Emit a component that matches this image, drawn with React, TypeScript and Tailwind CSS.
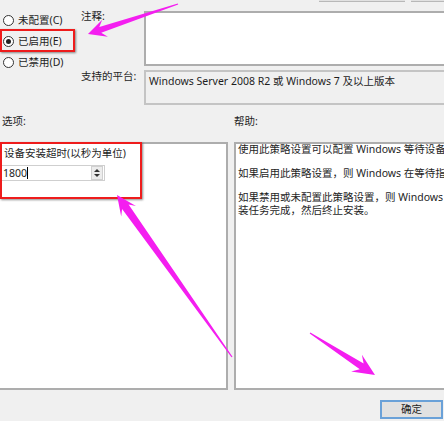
type P = [number, number];

// tapered annotation arrow: thin at the tail, wide barbed head at the tip
function arrow(tail: P, tip: P, headLen: number, headHalf: number, neckHalf: number) {
  const dx = tip[0] - tail[0];
  const dy = tip[1] - tail[1];
  const len = Math.hypot(dx, dy);
  const ux = dx / len;
  const uy = dy / len;
  const px = -uy;
  const py = ux;
  const base: P = [tip[0] - ux * headLen, tip[1] - uy * headLen];
  const neck: P = [tip[0] - ux * headLen * 0.72, tip[1] - uy * headLen * 0.72];
  const pts: P[] = [
    [tail[0] + px * 0.6, tail[1] + py * 0.6],
    [neck[0] + px * neckHalf, neck[1] + py * neckHalf],
    [base[0] + px * headHalf, base[1] + py * headHalf],
    tip,
    [base[0] - px * headHalf, base[1] - py * headHalf],
    [neck[0] - px * neckHalf, neck[1] - py * neckHalf],
    [tail[0] - px * 0.6, tail[1] - py * 0.6],
  ];
  return pts.map((p) => `${p[0].toFixed(1)},${p[1].toFixed(1)}`).join(" ");
}

const Radio = ({ label, checked }: { label: string; checked?: boolean }) => (
  <div className="flex items-center h-[21px] pl-[3px] gap-[4px]">
    <span className="w-[11px] h-[11px] rounded-full border border-[#333] bg-white flex items-center justify-center">
      {checked && <span className="w-[5px] h-[5px] rounded-full bg-[#222]" />}
    </span>
    <span className="leading-[13px] whitespace-nowrap">{label}</span>
  </div>
);

export default function App() {
  return (
    <div className="relative w-[444px] h-[423px] overflow-hidden bg-white text-[10.5px] text-[#1e1e1e] font-['Noto_Sans','Noto_Sans_CJK_SC',sans-serif]">
      <div className="h-[421px] bg-[#f0f0f0] flex flex-col">
        {/* bottoms of the buttons cut off by the screenshot */}
        <div className="flex h-[2px] gap-[6px] pl-[319px]">
          <div className="w-[86px] shrink-0 bg-[#e1e1e1] border-b border-[#b8b8b8]" />
          <div className="w-[40px] shrink-0 bg-[#e1e1e1] border-b border-[#b8b8b8]" />
        </div>

        <div className="flex h-[108px]">
          <div className="w-[81px] shrink-0 pt-[8px] flex flex-col">
            <Radio label="未配置(C)" />
            <Radio label="已启用(E)" checked />
            <Radio label="已禁用(D)" />
          </div>
          <div className="pt-[9px] flex flex-col gap-[4px]">
            <div className="flex">
              <span className="w-[63px] shrink-0 leading-[13px] -mt-[1px]">注释:</span>
              <div className="w-[320px] shrink-0 h-[55px] bg-white border-2 border-[#adadad]" />
            </div>
            <div className="flex">
              <span className="w-[63px] shrink-0 leading-[13px] whitespace-nowrap">支持的平台:</span>
              <div className="w-[320px] shrink-0 h-[35px] border-2 border-[#c4c4c4] pl-[3px] pt-[3px] leading-[13px] whitespace-nowrap">
                Windows Server 2008 R2 或 Windows 7 及以上版本
              </div>
            </div>
          </div>
        </div>

        <div className="flex h-[32px] pt-[5px] leading-[13px]">
          <span className="w-[234px] shrink-0 pl-[2px]">选项:</span>
          <span>帮助:</span>
        </div>

        <div className="flex h-[248px] gap-[6px]">
          <div className="w-[228px] shrink-0 bg-white border-2 border-l-0 border-[#adadad] pt-[3px]">
            <div className="pl-[4px] leading-[13px] whitespace-nowrap">设备安装超时(以秒为单位)</div>
            <div className="mt-[5px] w-[105px] h-[16px] bg-white border border-[#cfcfcf] flex items-center justify-between">
              <span className="flex items-center pl-[2px] leading-[13px]">
                1800
                <span className="w-px h-[12px] bg-black" />
              </span>
              <span className="w-[12px] h-[14px] mr-[1px] bg-[#ececec] border border-[#d0d0d0] flex flex-col items-center justify-center gap-[2px]">
                <span className="w-0 h-0 border-l-[3px] border-r-[3px] border-b-[3px] border-l-transparent border-r-transparent border-b-[#333]" />
                <span className="w-0 h-0 border-l-[3px] border-r-[3px] border-t-[3px] border-l-transparent border-r-transparent border-t-[#333]" />
              </span>
            </div>
          </div>
          <div className="w-[216px] shrink-0 bg-white border-2 border-r-0 border-[#adadad] pl-[2px] leading-[13px] whitespace-nowrap overflow-hidden">
            <p className="-mt-[1px] mb-[11px]">使用此策略设置可以配置 Windows 等待设备安装任务完成的秒数。</p>
            <p className="mb-[11px]">如果启用此策略设置，则 Windows 在等待指定的秒数后终止安装。</p>
            <p>如果禁用或未配置此策略设置，则 Windows 将等待 5 分钟让设备安</p>
            <p>装任务完成，然后终止安装。</p>
          </div>
        </div>

        <div className="flex justify-end h-[31px] pt-[10px] pr-[1px]">
          <div className="w-[63px] h-[19px] bg-[#e1e1e1] border-2 border-[#6aa1d8] flex items-center justify-center leading-[13px]">
            确定
          </div>
        </div>
      </div>

      {/* red highlight boxes */}
      <div className="absolute left-0 top-[29px] w-[75px] h-[23px] border-2 border-[#ee1c1c] shadow-[1px_1px_2px_rgba(0,0,0,0.45)]" />
      <div className="absolute left-0 top-[142px] w-[142px] h-[57px] border-[2.5px] border-[#ee1c1c] shadow-[1px_1px_2px_rgba(0,0,0,0.45)]" />

      {/* magenta pointer arrows */}
      <svg className="absolute inset-0 pointer-events-none" width="444" height="423" viewBox="0 0 444 423">
        <polygon points={arrow([178, 4], [88, 34], 18, 9, 3)} fill="#f41ef0" />
        <polygon points={arrow([232, 357], [117, 195], 20, 9, 4)} fill="#f41ef0" />
        <polygon points={arrow([310, 333], [375, 375], 22, 10, 3.5)} fill="#f41ef0" />
      </svg>
    </div>
  );
}
